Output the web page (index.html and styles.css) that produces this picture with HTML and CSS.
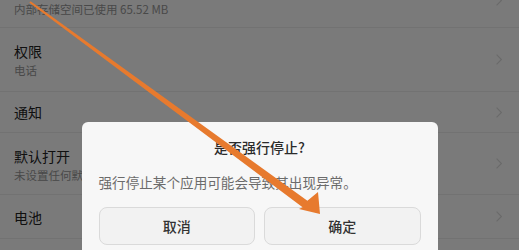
FILE: index.html
```html
<!DOCTYPE html>
<html lang="zh-CN">
<head>
    <meta charset="UTF-8">
    <meta name="viewport" content="width=device-width, initial-scale=1.0">
    <title>应用信息</title>
    <link rel="stylesheet" href="styles.css">
</head>
<body>
    <div class="settings">
        <div class="row row-top">
            <div class="row-text">
                <span class="row-sub">内部存储空间已使用 65.52 MB</span>
            </div>
            <svg class="chevron" viewBox="0 0 6 11"><polyline points="0.6 0.6 5.4 5.5 0.6 10.4"></polyline></svg>
        </div>
        <div class="row row-double">
            <div class="row-text">
                <span class="row-title">权限</span>
                <span class="row-sub">电话</span>
            </div>
            <svg class="chevron" viewBox="0 0 6 11"><polyline points="0.6 0.6 5.4 5.5 0.6 10.4"></polyline></svg>
        </div>
        <div class="row row-single row-short">
            <div class="row-text">
                <span class="row-title">通知</span>
            </div>
            <svg class="chevron" viewBox="0 0 6 11"><polyline points="0.6 0.6 5.4 5.5 0.6 10.4"></polyline></svg>
        </div>
        <div class="row row-double row-62">
            <div class="row-text">
                <span class="row-title">默认打开</span>
                <span class="row-sub">未设置任何默认操作</span>
            </div>
            <svg class="chevron" viewBox="0 0 6 11"><polyline points="0.6 0.6 5.4 5.5 0.6 10.4"></polyline></svg>
        </div>
        <div class="row row-single">
            <div class="row-text">
                <span class="row-title">电池</span>
            </div>
            <svg class="chevron" viewBox="0 0 6 11"><polyline points="0.6 0.6 5.4 5.5 0.6 10.4"></polyline></svg>
        </div>
    </div>

    <div class="dim-layer">
        <div class="dialog">
            <h3 class="dialog-title">是否强行停止?</h3>
            <p class="dialog-message">强行停止某个应用可能会导致其出现异常。</p>
            <div class="dialog-buttons">
                <button class="dialog-btn">取消</button>
                <button class="dialog-btn">确定</button>
            </div>
        </div>
    </div>

    <!-- annotation arrow drawn over the screenshot -->
    <svg class="pointer-arrow" viewBox="0 0 519 250">
        <polygon points="30.6,1.2 307.4,200.8 318,192 320,214 299,209 302.6,207.2 29.4,2.8"></polygon>
    </svg>
</body>
</html>
```

FILE: styles.css
```css
:root {
    --title-color: #222;
    --sub-color: #999;
    --divider: #eee;
    --chevron: #dedede;
    --arrow: #e77a2e;
}

* {
    margin: 0;
    padding: 0;
    box-sizing: border-box;
}

body {
    font-family: "Noto Sans CJK SC", "Noto Sans", sans-serif;
    width: 519px;
    height: 250px;
    overflow: hidden;
    background-color: white;
    position: relative;
}

.settings {
    display: flex;
    flex-direction: column;
}

.row {
    display: flex;
    align-items: center;
    padding: 0 17px 0 14px;
    border-bottom: 1px solid var(--divider);
}

.row-text {
    flex: 1;
    display: flex;
    flex-direction: column;
}

.row-title {
    font-size: 14px;
    line-height: 20px;
    color: var(--title-color);
}

.row-sub {
    font-size: 11.5px;
    line-height: 18px;
    color: var(--sub-color);
}

.row-top {
    height: 55px;
    margin-top: -27px;
}

.row-top .row-text {
    align-self: stretch;
    padding-top: 27px;
}

.row-double {
    height: 64px;
}

.row-double .row-text {
    align-self: stretch;
    padding-top: 13px;
}

.row-62 {
    height: 62px;
}

.row-single {
    height: 44px;
}

.row-short {
    height: 41px;
}

.chevron {
    width: 6px;
    height: 11px;
    fill: none;
    stroke: var(--chevron);
    stroke-width: 1.2;
}

.dim-layer {
    position: fixed;
    inset: 0;
    background-color: rgba(0, 0, 0, 0.52);
    display: flex;
    justify-content: center;
    align-items: flex-start;
    padding-top: 122px;
}

.dialog {
    width: 356px;
    background-color: #f7f7f7;
    border-radius: 6px;
    padding: 14px 17px 17px;
}

.dialog-title {
    text-align: center;
    font-size: 14px;
    font-weight: 500;
    line-height: 22px;
    color: #2b2b2b;
}

.dialog-message {
    margin-top: 14px;
    font-size: 13.6px;
    line-height: 20px;
    color: #6b6b6b;
}

.dialog-buttons {
    display: flex;
    gap: 9px;
    margin-top: 15px;
}

.dialog-btn {
    flex: 1;
    height: 38px;
    background-color: #f2f2f2;
    border: 1px solid #dadada;
    border-radius: 8px;
    font-family: inherit;
    font-size: 14px;
    font-weight: 500;
    color: #333;
}

.pointer-arrow {
    position: absolute;
    top: 0;
    left: 0;
    width: 519px;
    height: 250px;
    fill: var(--arrow);
    pointer-events: none;
}
```
